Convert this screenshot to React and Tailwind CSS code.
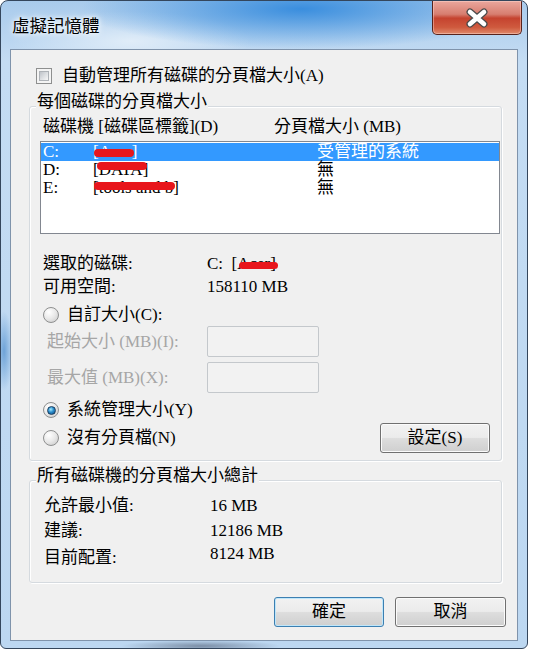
import React from "react";

function Checkbox() {
  return (
    <div className="w-[16px] h-[16px] border border-[#8e8f8f] bg-[#f4f4f4] p-[2px] shrink-0">
      <div className="w-full h-full border border-[#aeb2b7] bg-[linear-gradient(135deg,#bfc3c9,#dfe1e4_55%,#f7f7f7)]" />
    </div>
  );
}

function Radio({ checked }) {
  return (
    <div className="w-[16px] h-[16px] rounded-full border border-[#8e8f8f] bg-[radial-gradient(circle_at_35%_30%,#ffffff,#e8e8e8_50%,#c6c6c6)] flex items-center justify-center shrink-0">
      {checked && (
        <div className="w-[9px] h-[9px] rounded-full border border-[#1b3e5f] bg-[radial-gradient(circle_at_40%_35%,#a4ecff,#2a8ccc_45%,#0d4a7d)]" />
      )}
    </div>
  );
}

function Group({ label, className, children }) {
  return (
    <div
      className={
        "relative ml-[18px] w-[473px] border border-[#d5dadf] rounded-[3px] shadow-[inset_1px_1px_0_#ffffff,1px_1px_0_#ffffff] " +
        className
      }
    >
      <span className="absolute left-[6px] top-[-16px] px-[1px] bg-[#f0f0f0] leading-[22px]">
        {label}
      </span>
      {children}
    </div>
  );
}

function Button({ children, isDefault, className }) {
  return (
    <div
      className={
        "h-[30px] rounded-[3px] border flex items-center justify-center bg-[linear-gradient(to_bottom,#f2f2f2_0%,#ebebeb_48%,#dddddd_52%,#cfcfcf_100%)] " +
        (isDefault
          ? "border-[#3c7fb1] shadow-[inset_0_0_0_1px_#bfe6fa] "
          : "border-[#707070] shadow-[inset_0_0_0_1px_#fbfbfb] ") +
        className
      }
    >
      {children}
    </div>
  );
}

export default function App() {
  return (
    <div className="w-[534px] h-[651px] bg-white font-['Liberation_Serif','Noto_Sans_CJK_TC',serif] text-[17px] text-black">
      <div className="w-[528px] h-[649px] border border-[#34465c] rounded-t-[8px] rounded-b-[6px] overflow-hidden flex flex-col bg-[radial-gradient(ellipse_220px_40px_at_300px_8px,#3a8ede,rgba(58,142,222,0)),radial-gradient(ellipse_120px_30px_at_130px_40px,rgba(255,255,255,0.55),rgba(255,255,255,0)),radial-gradient(ellipse_9px_40px_at_3px_350px,#6ea3d8,rgba(110,163,216,0)),radial-gradient(ellipse_80px_6px_at_200px_645px,#7b8ea6,rgba(123,142,166,0)),linear-gradient(to_bottom,#a9cbec,#c4dcf3_60px,#bcd7f1)]">
        {/* title bar */}
        <div className="h-[48px] shrink-0 flex justify-between items-start">
          <div className="pl-[11px] pt-[13px] leading-[24px] text-[17.5px] [text-shadow:0_0_8px_#ffffff,0_0_4px_#ffffff]">
            虛擬記憶體
          </div>
          <div className="mr-[5px] w-[90px] h-[34px] rounded-b-[5px] border border-t-0 border-[#58231c] bg-[linear-gradient(to_bottom,#eaa79d,#d77e70_40%,#c5432f_52%,#cf5a3e_80%,#e08a6c)] shadow-[inset_0_0_0_1px_rgba(255,220,210,0.45)] flex items-center justify-center">
            <svg width="24" height="20" viewBox="0 0 24 20">
              <path d="M5 4 L19 16 M19 4 L5 16" stroke="#4a4a4a" strokeWidth="7" strokeLinecap="round" fill="none" />
              <path d="M5 4 L19 16 M19 4 L5 16" stroke="#ffffff" strokeWidth="4.6" strokeLinecap="round" fill="none" />
            </svg>
          </div>
        </div>

        {/* client area */}
        <div className="flex-1 mx-[9px] mb-[7px] border border-[#7f93ab] bg-[#f0f0f0] flex flex-col">
          <div className="flex items-center h-[20px] mt-[16px] ml-[25px]">
            <Checkbox />
            <span className="ml-[10px] leading-[20px]">自動管理所有磁碟的分頁檔大小(A)</span>
          </div>

          <Group label="每個磁碟的分頁檔大小" className="mt-[20px] pb-[7px]">
            <div className="flex pt-[9px] pl-[13px] leading-[22px]">
              <span className="w-[231px]">磁碟機 [磁碟區標籤](D)</span>
              <span>分頁檔大小 (MB)</span>
            </div>
            <div className="mt-[3px] ml-[10px] w-[460px] h-[93px] border border-[#828790] bg-white pt-[1px]">
              <div className="flex h-[18px] leading-[18px] pl-[2px] bg-[#3399ff] text-white">
                <span className="w-[50px]">C:</span>
                <span className="w-[224px] relative">
                  [Acer]
                  <span className="absolute left-[1px] top-[6px] w-[40px] h-[8px] rounded-full bg-[#e8161c]" />
                </span>
                <span>受管理的系統</span>
              </div>
              <div className="flex h-[18px] leading-[18px] pl-[2px]">
                <span className="w-[50px]">D:</span>
                <span className="w-[224px] relative">
                  [DATA]
                  <span className="absolute left-[4px] top-[1px] w-[50px] h-[8px] rounded-full bg-[#e8161c]" />
                </span>
                <span>無</span>
              </div>
              <div className="flex h-[18px] leading-[18px] pl-[2px]">
                <span className="w-[50px]">E:</span>
                <span className="w-[224px] relative">
                  [tools and b]
                  <span className="absolute left-[1px] top-[3px] w-[81px] h-[8px] rounded-full bg-[#e8161c]" />
                </span>
                <span>無</span>
              </div>
            </div>

            <div className="mt-[18px] pl-[13px] flex leading-[23px]">
              <span className="w-[164px]">選取的磁碟:</span>
              <span className="relative">
                C:&nbsp;&nbsp;[Acer]
                <span className="absolute left-[32px] top-[10px] w-[39px] h-[7px] rounded-full bg-[#e8161c]" />
              </span>
            </div>
            <div className="pl-[13px] flex leading-[23px]">
              <span className="w-[164px]">可用空間:</span>
              <span>158110 MB</span>
            </div>

            <div className="mt-[6px] pl-[13px] flex items-center h-[22px]">
              <Radio />
              <span className="ml-[8px]">自訂大小(C):</span>
            </div>
            <div className="pl-[17px] flex items-center h-[31px] text-[#a6a6a6]">
              <span className="w-[160px]">起始大小 (MB)(I):</span>
              <div className="w-[112px] h-[31px] border border-[#c4c8cc] bg-[#f2f2f2] rounded-[2px]" />
            </div>
            <div className="mt-[5px] pl-[17px] flex items-center h-[31px] text-[#a6a6a6]">
              <span className="w-[160px]">最大值 (MB)(X):</span>
              <div className="w-[112px] h-[31px] border border-[#c4c8cc] bg-[#f2f2f2] rounded-[2px]" />
            </div>

            <div className="mt-[6px] pl-[13px] flex items-center h-[22px]">
              <Radio checked />
              <span className="ml-[8px]">系統管理大小(Y)</span>
            </div>
            <div className="mt-[2px] pl-[13px] flex items-center h-[30px]">
              <Radio />
              <span className="ml-[8px]">沒有分頁檔(N)</span>
              <Button className="ml-auto mr-[11px] w-[110px]">設定(S)</Button>
            </div>
          </Group>

          <Group label="所有磁碟機的分頁檔大小總計" className="mt-[19px] pt-[12px] pb-[14px]">
            <div className="pl-[14px] flex items-center h-[25px]">
              <span className="w-[166px]">允許最小值:</span>
              <span>16 MB</span>
            </div>
            <div className="pl-[14px] flex items-center h-[25px]">
              <span className="w-[166px]">建議:</span>
              <span>12186 MB</span>
            </div>
            <div className="pl-[14px] flex items-center h-[25px]">
              <span className="w-[166px] relative top-[2px]">目前配置:</span>
              <span className="relative top-[-2px]">8124 MB</span>
            </div>
          </Group>

          <div className="mt-[14px] mr-[11px] flex justify-end gap-[11px]">
            <Button isDefault className="w-[110px]">確定</Button>
            <Button className="w-[111px]">取消</Button>
          </div>
        </div>
      </div>
    </div>
  );
}
